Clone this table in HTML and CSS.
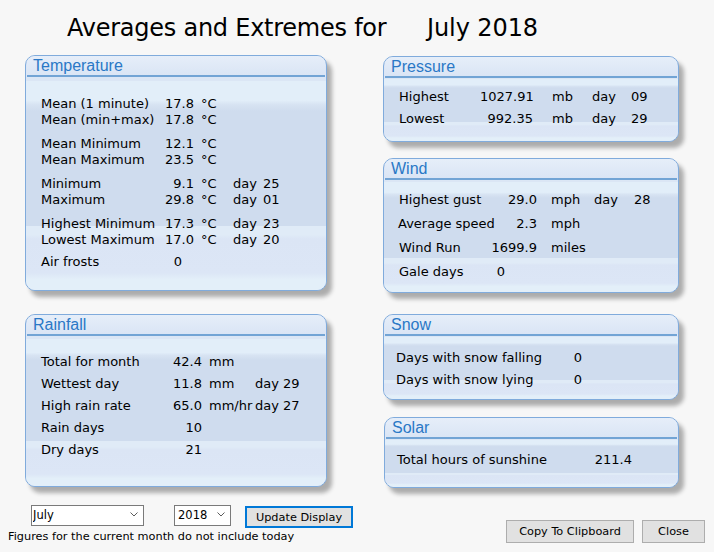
FILE: index.html
```html
<!DOCTYPE html>
<html lang="en">
<head>
<meta charset="utf-8">
<title>Averages and Extremes</title>
<link rel="stylesheet" href="styles.css">
</head>
<body>
<div class="page">
  <h1 class="title"><span class="title__text">Averages and Extremes for</span><span class="title__month">July 2018</span></h1>

  <div class="columns">
    <div class="col col--left">
      <section class="panel panel--temp">
        <h2 class="panel__title">Temperature</h2>
        <div class="panel__body">
          <div class="group">
            <div class="row"><span class="label">Mean (1 minute)</span><span class="val">17.8</span><span class="unit">°C</span></div>
            <div class="row"><span class="label">Mean (min+max)</span><span class="val">17.8</span><span class="unit">°C</span></div>
          </div>
          <div class="group">
            <div class="row"><span class="label">Mean Minimum</span><span class="val">12.1</span><span class="unit">°C</span></div>
            <div class="row"><span class="label">Mean Maximum</span><span class="val">23.5</span><span class="unit">°C</span></div>
          </div>
          <div class="group">
            <div class="row"><span class="label">Minimum</span><span class="val">9.1</span><span class="unit">°C</span><span class="day">day</span><span class="num">25</span></div>
            <div class="row"><span class="label">Maximum</span><span class="val">29.8</span><span class="unit">°C</span><span class="day">day</span><span class="num">01</span></div>
          </div>
          <div class="group">
            <div class="row"><span class="label">Highest Minimum</span><span class="val">17.3</span><span class="unit">°C</span><span class="day">day</span><span class="num">23</span></div>
            <div class="row"><span class="label">Lowest Maximum</span><span class="val">17.0</span><span class="unit">°C</span><span class="day">day</span><span class="num">20</span></div>
          </div>
          <div class="group group--frost">
            <div class="row"><span class="label">Air frosts</span><span class="val val--count">0</span></div>
          </div>
        </div>
      </section>

      <section class="panel panel--rain">
        <h2 class="panel__title">Rainfall</h2>
        <div class="panel__body">
          <div class="row"><span class="label">Total for month</span><span class="val">42.4</span><span class="unit">mm</span></div>
          <div class="row"><span class="label">Wettest day</span><span class="val">11.8</span><span class="unit">mm</span><span class="day">day 29</span></div>
          <div class="row"><span class="label">High rain rate</span><span class="val">65.0</span><span class="unit">mm/hr</span><span class="day">day 27</span></div>
          <div class="row"><span class="label">Rain days</span><span class="val">10</span></div>
          <div class="row"><span class="label">Dry days</span><span class="val">21</span></div>
        </div>
      </section>
    </div>

    <div class="col col--right">
      <section class="panel panel--pressure">
        <h2 class="panel__title">Pressure</h2>
        <div class="panel__body">
          <div class="row"><span class="label">Highest</span><span class="val">1027.91</span><span class="unit">mb</span><span class="day">day</span><span class="num">09</span></div>
          <div class="row"><span class="label">Lowest</span><span class="val">992.35</span><span class="unit">mb</span><span class="day">day</span><span class="num">29</span></div>
        </div>
      </section>

      <section class="panel panel--wind">
        <h2 class="panel__title">Wind</h2>
        <div class="panel__body">
          <div class="row"><span class="label">Highest gust</span><span class="val">29.0</span><span class="unit">mph</span><span class="day">day</span><span class="num">28</span></div>
          <div class="row"><span class="label label--tight">Average speed</span><span class="val">2.3</span><span class="unit">mph</span></div>
          <div class="row"><span class="label">Wind Run</span><span class="val">1699.9</span><span class="unit">miles</span></div>
          <div class="row"><span class="label">Gale days</span><span class="val val--gale">0</span></div>
        </div>
      </section>

      <section class="panel panel--snow">
        <h2 class="panel__title">Snow</h2>
        <div class="panel__body">
          <div class="row"><span class="label">Days with snow falling</span><span class="val">0</span></div>
          <div class="row"><span class="label">Days with snow lying</span><span class="val">0</span></div>
        </div>
      </section>

      <section class="panel panel--solar">
        <h2 class="panel__title">Solar</h2>
        <div class="panel__body">
          <div class="row"><span class="label">Total hours of sunshine</span><span class="val">211.4</span></div>
        </div>
      </section>
    </div>
  </div>

  <div class="footer">
    <div class="footer__left">
      <div class="controls">
        <div class="select select--month">
          <select class="select__input" aria-label="Month">
            <option selected>July</option>
          </select>
          <svg class="select__chevron" width="8" height="5" viewBox="0 0 8 5"><polyline points="0.5,0.5 4,4 7.5,0.5" fill="none" stroke="#5c5c5c" stroke-width="1"/></svg>
        </div>
        <div class="select select--year">
          <select class="select__input" aria-label="Year">
            <option selected>2018</option>
          </select>
          <svg class="select__chevron" width="8" height="5" viewBox="0 0 8 5"><polyline points="0.5,0.5 4,4 7.5,0.5" fill="none" stroke="#5c5c5c" stroke-width="1"/></svg>
        </div>
        <button class="btn btn--default" type="button">Update Display</button>
      </div>
      <p class="note">Figures for the current month do not include today</p>
    </div>
    <div class="actions">
      <button class="btn btn--copy" type="button">Copy To Clipboard</button>
      <button class="btn btn--close" type="button">Close</button>
    </div>
  </div>
</div>
</body>
</html>
```

FILE: styles.css
```css
html, body {
  margin: 0;
  padding: 0;
  background: #f7f7f7;
}

body {
  font-family: "DejaVu Sans", Verdana, sans-serif;
  color: #000;
  width: 714px;
  height: 552px;
  overflow: hidden;
}

.page {
  display: flex;
  flex-direction: column;
}

/* ---------- title ---------- */
.title {
  margin: 0;
  padding: 14px 0 0 67px;
  font-size: 24px;
  line-height: 28px;
  font-weight: normal;
  color: #000;
  display: flex;
}

.title__text {
  display: inline-block;
  width: 360px;
  white-space: nowrap;
  letter-spacing: -0.25px;
}

.title__month {
  letter-spacing: -0.1px;
}

/* ---------- columns ---------- */
.columns {
  display: flex;
  gap: 56px;
  padding-left: 25px;
  margin-top: 13px;
}

.col {
  display: flex;
  flex-direction: column;
}

.col--left {
  width: 302px;
  gap: 23px;
}

.col--right {
  width: 296px;
  padding-top: 1px;
}

/* ---------- panel ---------- */
.panel {
  box-sizing: border-box;
  border: 1px solid #80abdc;
  border-radius: 10px;
  box-shadow: 5px 6px 4px rgba(0, 0, 0, 0.3);
  display: flex;
  flex-direction: column;
  overflow: hidden;
  background: #dce6f6;
}

.panel__title {
  margin: 0 1px;
  height: 19px;
  padding: 0 0 0 6px;
  font-family: "Liberation Sans", Arial, sans-serif;
  font-size: 16px;
  line-height: 19px;
  font-weight: normal;
  color: #2a78c6;
  background: linear-gradient(#e6eef9, #dae5f5);
  border-bottom: 2px solid #72a4d5;
}

.panel__body {
  flex: 1;
  font-size: 13px;
  background: linear-gradient(
    #dbe6f5 0%, #dbe6f5 2%,
    #e2eef9 2%, #e2eef9 11%,
    #d7e3f2 13%, #cfdcee 16%,
    #cfdcee 70%,
    #e0ebf7 70%, #e0ebf7 74%,
    #dbe5f5 76%, #dce6f6 92%,
    #e3eff9 95%, #e3eff9 100%
  );
}

.row {
  display: grid;
  white-space: nowrap;
}

.val {
  text-align: right;
}

/* Temperature */
.panel--temp {
  height: 236px;
}

.panel--temp .panel__body {
  padding: 19px 0 0 15px;
}

.panel--temp .row {
  grid-template-columns: 119px 34px 39px 30px auto;
  line-height: 16px;
}

.panel--temp .unit {
  padding-left: 7px;
}

.group + .group {
  margin-top: 8px;
}

.group--frost.group {
  margin-top: 6px;
}

.val--count {
  padding-right: 12px;
}

/* Rainfall */
.panel--rain {
  height: 173px;
}

.panel--rain .panel__body {
  padding: 15px 0 0 15px;
}

.panel--rain .row {
  grid-template-columns: 119px 42px 53px auto;
  line-height: 22px;
}

.panel--rain .unit {
  padding-left: 7px;
}

/* Pressure */
.panel--pressure {
  height: 86px;
}

.panel--pressure .panel__body {
  padding: 8px 0 0 15px;
}

.panel--pressure .row {
  grid-template-columns: 81px 53px 59px 39px auto;
  line-height: 22px;
}

.panel--pressure .unit {
  padding-left: 19px;
}

/* Wind */
.panel--wind {
  height: 135px;
  margin-top: 16px;
}

.panel--wind .panel__body {
  padding: 8px 0 0 15px;
}

.panel--wind .row {
  grid-template-columns: 91px 47px 57px 40px auto;
  line-height: 24px;
}

.panel--wind .unit {
  padding-left: 14px;
}

.label--tight {
  margin-left: -1px;
}

.val--gale {
  padding-right: 32px;
}

/* Snow */
.panel--snow {
  height: 86px;
  margin-top: 21px;
}

.panel--snow .panel__body {
  padding: 11px 0 0 12px;
}

.panel--snow .row {
  grid-template-columns: 164px 22px;
  line-height: 22px;
}

/* Solar */
.panel--solar {
  height: 71px;
  margin-top: 17px;
  margin-left: 1px;
  width: 295px;
}

.panel--solar .panel__body {
  padding: 10px 0 0 12px;
}

.panel--solar .row {
  grid-template-columns: 193px 42px;
  line-height: 22px;
}

/* ---------- footer ---------- */
.footer {
  display: flex;
  justify-content: space-between;
  align-items: flex-start;
  padding: 0 9px 0 8px;
  margin-top: 16px;
}

.controls {
  display: flex;
  align-items: flex-start;
  padding-left: 23px;
}

.select {
  position: relative;
  height: 21px;
}

.select--month {
  width: 113px;
}

.select--year {
  width: 57px;
  margin-left: 30px;
}

.select__input {
  -webkit-appearance: none;
  appearance: none;
  box-sizing: border-box;
  width: 100%;
  height: 21px;
  margin: 0;
  padding: 0 0 0 1px;
  border: 1px solid #7a7a7a;
  border-radius: 0;
  background: #fff;
  font-family: "DejaVu Sans", Verdana, sans-serif;
  font-size: 11.5px;
  color: #000;
  outline: none;
}

.select--year .select__input {
  padding-left: 3px;
}

.select__chevron {
  position: absolute;
  right: 6px;
  top: 8px;
  pointer-events: none;
}

.btn {
  box-sizing: border-box;
  margin: 0;
  padding: 0;
  height: 23px;
  background: #e1e1e1;
  border: 1px solid #adadad;
  border-radius: 0;
  font-family: "DejaVu Sans", Verdana, sans-serif;
  font-size: 11.3px;
  color: #000;
}

.btn--default {
  width: 108px;
  height: 22px;
  margin-left: 14px;
  margin-top: 2px;
  border: 2px solid #0078d7;
}

.note {
  margin: 2px 0 0 0;
  font-size: 11.3px;
  line-height: 14px;
  white-space: nowrap;
}

.actions {
  display: flex;
  gap: 8px;
  margin-top: 16px;
}

.btn--copy {
  width: 128px;
}

.btn--close {
  width: 63px;
}
```
